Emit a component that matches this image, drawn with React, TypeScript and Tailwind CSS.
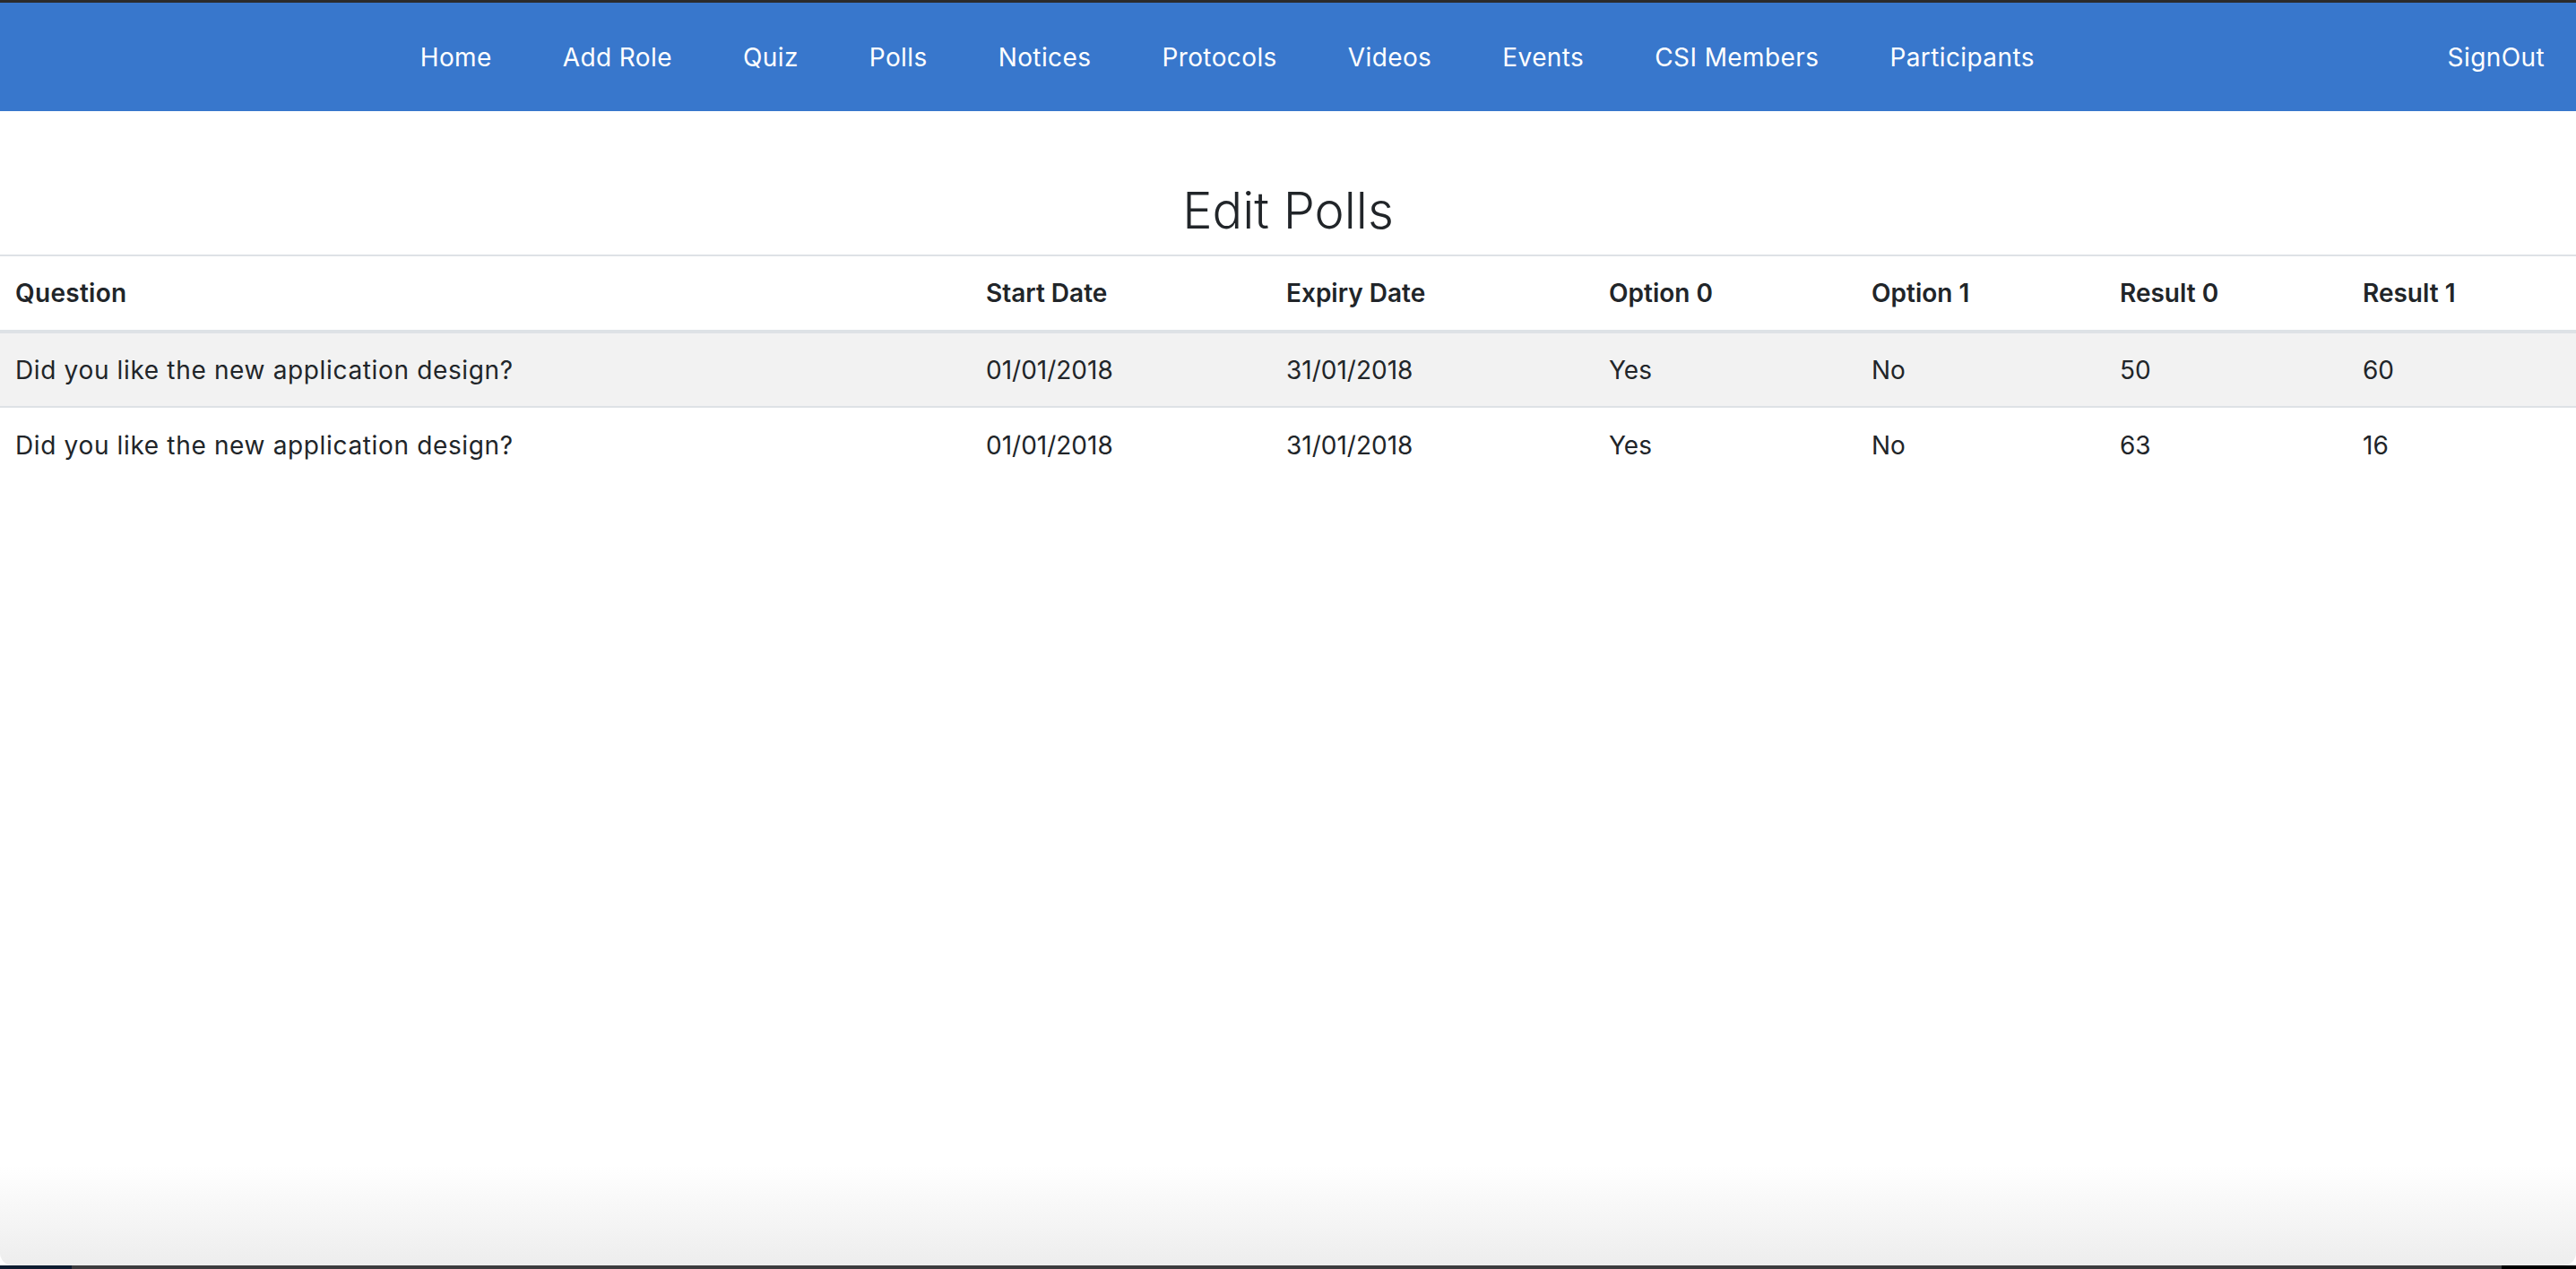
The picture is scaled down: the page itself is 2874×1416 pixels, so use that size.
import React from 'react';

const navLinks = ['Home', 'Add Role', 'Quiz', 'Polls', 'Notices', 'Protocols', 'Videos', 'Events', 'CSI Members', 'Participants'];

const polls = [
  { question: 'Did you like the new application design?', start: '01/01/2018', expiry: '31/01/2018', opt0: 'Yes', opt1: 'No', res0: '50', res1: '60' },
  { question: 'Did you like the new application design?', start: '01/01/2018', expiry: '31/01/2018', opt0: 'Yes', opt1: 'No', res0: '63', res1: '16' },
];

const cols = 'grid grid-cols-[1083px_335px_360px_293px_277px_271px_1fr]';

const App: React.FC = () => {
  return (
    <div className="w-full h-[1416px] overflow-hidden flex flex-col bg-white text-[#212529]" style={{ fontFamily: 'Inter, "Noto Sans", sans-serif' }}>
      {/* top window edge */}
      <div className="h-[3px] bg-[#2b2b2b]" />

      {/* === NAVBAR === */}
      <nav className="h-[121px] bg-[#3877cc] flex items-center text-white text-[28px]">
        <ul className="flex-1 flex justify-center gap-[79px] pl-[48px]">
          {navLinks.map((link) => (
            <li key={link} className="cursor-pointer tracking-[0.4px]">{link}</li>
          ))}
        </ul>
        <div className="pr-[35px] pl-[40px] cursor-pointer tracking-[0.4px]">SignOut</div>
      </nav>

      {/* === CONTENT === */}
      <main className="flex-1 flex flex-col">
        <h2 className="mt-[78px] mb-[15px] text-center text-[56px] leading-[1.2] font-light">Edit Polls</h2>

        <div className="w-full text-[28px]">
          {/* header */}
          <div className={`${cols} h-[88px] border-t-2 border-b-4 border-[#dee2e6] items-center font-semibold`}>
            <div className="pl-[17px] tracking-[0.3px]">Question</div>
            <div className="pl-[17px]">Start Date</div>
            <div className="pl-[17px]">Expiry Date</div>
            <div className="pl-[17px]">Option 0</div>
            <div className="pl-[17px]">Option 1</div>
            <div className="pl-[17px]">Result 0</div>
            <div className="pl-[17px]">Result 1</div>
          </div>

          {polls.map((p, i) => (
            <div
              key={i}
              className={`${cols} items-center ${i === 0 ? 'h-[81px] bg-[#f2f2f2]' : 'h-[85px] border-t-2 border-[#dee2e6]'}`}
            >
              <div className="pl-[17px] tracking-[0.65px]">{p.question}</div>
              <div className="pl-[17px]">{p.start}</div>
              <div className="pl-[17px]">{p.expiry}</div>
              <div className="pl-[17px]">{p.opt0}</div>
              <div className="pl-[17px]">{p.opt1}</div>
              <div className="pl-[17px]">{p.res0}</div>
              <div className="pl-[17px]">{p.res1}</div>
            </div>
          ))}
        </div>
      </main>

      {/* window bottom shadow */}
      <div className="h-[112px] bg-gradient-to-b from-white to-[#ededed] rounded-b-[14px]" />
      <div className="h-[4px] flex">
        <div className="w-[80px] bg-[#0e1c30]" />
        <div className="flex-1 bg-[#3c3c3e]" />
        <div className="w-[83px] bg-black" />
      </div>
    </div>
  );
};

export default App;
